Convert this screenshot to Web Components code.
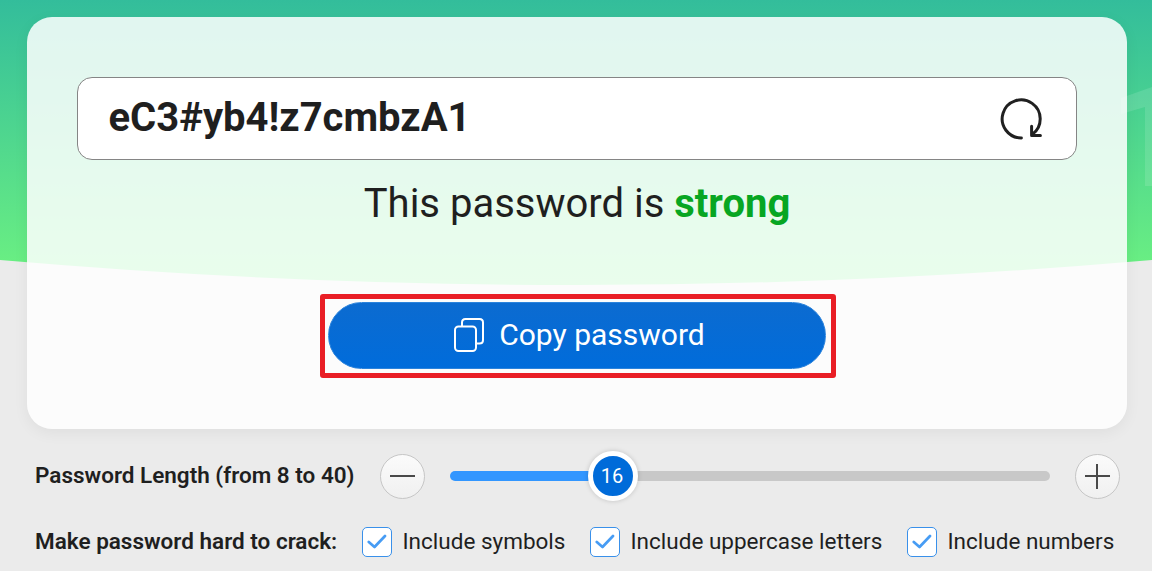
<!DOCTYPE html>
<html lang="en">
<head>
<meta charset="utf-8">
<title>Password Generator</title>
<style>
html,body{margin:0;height:100%;overflow:hidden}
body{font-family:Roboto,"Liberation Sans",sans-serif;color:#1f1f1f;background:#ebebeb}
</style>
</head>
<body>
<password-generator></password-generator>
<script>
function define(name, markup) {
  const template = document.createElement('template');
  template.innerHTML = markup;
  customElements.define(name, class extends HTMLElement {
    constructor() {
      super();
      this.attachShadow({mode: 'open'}).append(template.content.cloneNode(true));
    }
  });
}

define('hero-backdrop', `
<style>:host{display:block;width:1152px;height:290px}svg{display:block}</style>
<svg width="1152" height="290" viewBox="0 0 1152 290" aria-hidden="true">
  <defs><linearGradient id="g" x1="0" y1="0" x2="0" y2="1"><stop offset="0" stop-color="#33bd9b"/><stop offset=".92" stop-color="#69ee83"/><stop offset="1" stop-color="#6aef83"/></linearGradient></defs>
  <path d="M0 0H1152V260Q864 285 576 285Q288 285 0 260Z" fill="url(#g)"/>
  <path d="M1121 98L1152 87V186H1145V107L1121 114Z" fill="#fff" opacity=".12"/>
</svg>`);

define('password-field', `
<style>
:host{display:flex;box-sizing:border-box;align-items:center;justify-content:space-between;height:83px;padding:0 31.5px 0 30.5px;border:1px solid #858585;border-radius:15px;background:#fff}
.value{font-size:40px;font-weight:700;line-height:48px;padding-bottom:2px}
button{display:block;border:0;background:none;padding:0;width:46px;height:46px}
svg{display:block}
</style>
<span class="value"><slot></slot></span>
<button aria-label="Generate a new password"><svg width="46" height="46" viewBox="0 0 46 46" fill="none" stroke="#202020" stroke-width="3" stroke-linecap="round" stroke-linejoin="round"><path d="M22.4 41.9A19 19 0 1 1 33.6 38.1M32.6 30.3V39.5H41.4"/></svg></button>`);

define('password-status', `
<style>:host{display:block;text-align:center;font-size:40px;line-height:48px;white-space:nowrap}::slotted(b){color:#07a622;font-weight:700}</style>
<slot></slot>`);

define('copy-button', `
<style>
:host{display:block;box-sizing:border-box;width:516px;height:84px;border:5px solid #e91e25;border-radius:3px;padding:3px 3px 2px}
button{display:flex;box-sizing:border-box;align-items:center;justify-content:center;gap:15px;width:498px;height:67px;border:1px solid #2b83dc;border-radius:34px;background:linear-gradient(#0c6bd0,#006cdb);padding:0 0 2px 3px;color:#fff;font:30px/36px Roboto,"Liberation Sans",sans-serif;white-space:nowrap}
svg{flex:none}
</style>
<button><svg width="32" height="35" viewBox="0 0 32 35" fill="none" stroke="#fff" stroke-width="2"><rect x="3" y="9.5" width="21" height="24.5" rx="3.5"/><path d="M10 9V5.5Q10 2 13.5 2H27.5Q31 2 31 5.5V23Q31 26.5 27.5 26.5H24"/></svg><slot></slot></button>`);

define('password-card', `
<style>
:host{display:flex;box-sizing:border-box;flex-direction:column;width:1100px;height:412px;border-radius:25px;padding:60px 50px 0;background:rgba(255,255,255,.85);box-shadow:0 4px 15px rgba(0,0,0,.055)}
password-status{margin-top:20px}
copy-button{margin:66px 0 0 243px}
</style>
<password-field>eC3#yb4!z7cmbzA1</password-field>
<password-status>This password is <b>strong</b></password-status>
<copy-button>Copy password</copy-button>`);

define('step-button', `
<style>:host{display:block}button{display:grid;place-items:center;box-sizing:border-box;width:45px;height:45px;border:1px solid #c6c6c6;border-radius:50%;background:linear-gradient(#fbfbfb,#f0f0f0);padding:0}</style>
<button><slot></slot></button>`);

define('length-slider', `
<style>
:host{display:grid;width:600px;height:52px;align-items:center}
.track{grid-area:1/1;height:10px;border-radius:5px;background:linear-gradient(90deg,#3296ff 150px,#c8c8c8 150px)}
.thumb{grid-area:1/1;display:grid;place-items:center;box-sizing:border-box;width:50px;height:50px;border:5px solid #fff;border-radius:50%;background:#006bd9;margin-left:137.5px;padding-right:1px;color:#fff;font-size:20px;line-height:24px;font-weight:450;box-shadow:0 0 5px rgba(0,0,0,.18)}
</style>
<div class="track"></div><div class="thumb"><slot></slot></div>`);

define('length-row', `
<style>
:host{display:flex;align-items:center;height:52px}
.label{width:345px;font-size:22.5px;line-height:28px;font-weight:600;white-space:nowrap;padding-bottom:2px}
length-slider{margin:0 25px}svg{display:block}
</style>
<span class="label">Password Length (from 8 to 40)</span>
<step-button><svg width="25" height="25"><path d="M0 12H25" stroke="#494949" stroke-width="2"/></svg></step-button>
<length-slider>16</length-slider>
<step-button><svg width="25" height="25"><path d="M0 12H25M12 0V25" stroke="#494949" stroke-width="2"/></svg></step-button>`);

define('check-option', `
<style>
:host{display:flex;align-items:center;gap:10.5px;font-size:22.5px;line-height:28px;white-space:nowrap}
.box{display:grid;place-items:center;box-sizing:border-box;width:30px;height:30px;border:1px solid #3990ea;border-radius:5px;background:#fff}
svg{display:block}.text{padding-bottom:2px}
</style>
<span class="box"><svg width="20" height="16" viewBox="0 0 20 16"><path d="M1.8 8L7.5 13L18 2" fill="none" stroke="#479cf4" stroke-width="2.7" stroke-linecap="round" stroke-linejoin="round"/></svg></span><span class="text"><slot></slot></span>`);

define('option-row', `
<style>
:host{display:grid;grid-template-columns:327px 228px 317px 220px;align-items:center;height:34px}
.label{font-size:22.5px;line-height:28px;font-weight:600;white-space:nowrap;padding-bottom:2px}
</style>
<span class="label">Make password hard to crack:</span>
<check-option>Include symbols</check-option>
<check-option>Include uppercase letters</check-option>
<check-option>Include numbers</check-option>`);

define('password-generator', `
<style>
:host{display:grid;width:1152px;height:571px;grid-template-rows:571px;overflow:hidden}
hero-backdrop,main{grid-area:1/1}
main{padding:17px 25px 0 27px}
length-row{margin:21px 0 0 8px}
option-row{margin:23px 0 0 8px}
</style>
<hero-backdrop></hero-backdrop>
<main><password-card></password-card><length-row></length-row><option-row></option-row></main>`);
</script>
</body>
</html>
